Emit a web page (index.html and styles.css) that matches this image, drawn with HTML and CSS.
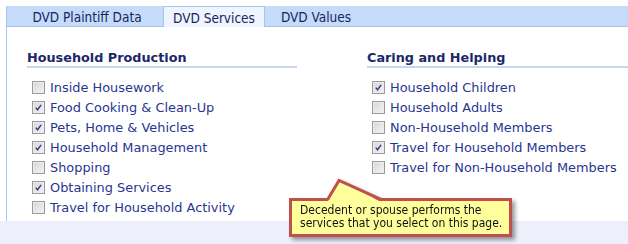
FILE: index.html
```html
<!DOCTYPE html>
<html>
<head>
<meta charset="utf-8">
<link rel="stylesheet" href="styles.css">
</head>
<body>
<div class="page">
  <div class="panel">
    <div class="tabbar">
      <div class="tab tab-plaintiff">DVD Plaintiff Data</div>
      <div class="tab tab-services active">DVD Services</div>
      <div class="tab tab-values">DVD Values</div>
    </div>
    <div class="content">
      <section class="col col-left">
        <h2 class="heading">Household Production</h2>
        <ul class="list">
          <li class="item"><span class="cb"></span>Inside Housework</li>
          <li class="item"><span class="cb checked"><svg viewBox="0 0 13 13"><path d="M3.3 6.6 L5.4 9.2 L9.6 3.4"/></svg></span>Food Cooking &amp; Clean-Up</li>
          <li class="item"><span class="cb checked"><svg viewBox="0 0 13 13"><path d="M3.3 6.6 L5.4 9.2 L9.6 3.4"/></svg></span>Pets, Home &amp; Vehicles</li>
          <li class="item"><span class="cb checked"><svg viewBox="0 0 13 13"><path d="M3.3 6.6 L5.4 9.2 L9.6 3.4"/></svg></span>Household Management</li>
          <li class="item"><span class="cb"></span>Shopping</li>
          <li class="item"><span class="cb checked"><svg viewBox="0 0 13 13"><path d="M3.3 6.6 L5.4 9.2 L9.6 3.4"/></svg></span>Obtaining Services</li>
          <li class="item"><span class="cb"></span>Travel for Household Activity</li>
        </ul>
      </section>
      <section class="col col-right">
        <h2 class="heading">Caring and Helping</h2>
        <ul class="list">
          <li class="item"><span class="cb checked"><svg viewBox="0 0 13 13"><path d="M3.3 6.6 L5.4 9.2 L9.6 3.4"/></svg></span>Household Children</li>
          <li class="item"><span class="cb"></span>Household Adults</li>
          <li class="item"><span class="cb"></span>Non-Household Members</li>
          <li class="item"><span class="cb checked"><svg viewBox="0 0 13 13"><path d="M3.3 6.6 L5.4 9.2 L9.6 3.4"/></svg></span>Travel for Household Members</li>
          <li class="item"><span class="cb"></span>Travel for Non-Household Members</li>
        </ul>
      </section>
    </div>
  </div>
  <div class="footer"></div>
  <div class="tip">
    <svg class="tip-pointer" width="70" height="26" viewBox="0 0 70 26">
      <polygon points="7,24.5 19,2 62,24.5" fill="#ffff9c"/>
      <polyline points="7.5,21.8 19,2.5 62,21.8" fill="none" stroke="#c0504d" stroke-width="3" stroke-linejoin="miter"/>
    </svg>
    <p class="tip-text">Decedent or spouse performs the<br>services that you select on this page.</p>
  </div>
</div>
</body>
</html>
```
FILE: styles.css
```css
html, body {
  margin: 0;
  padding: 0;
  background: #ffffff;
}
.page {
  position: relative;
  width: 628px;
  height: 244px;
  overflow: hidden;
  display: flex;
  flex-direction: column;
}
.panel {
  margin: 6px 0 0 6px;
  height: 215px;
  border-left: 1px solid #a9c6ee;
  display: flex;
  flex-direction: column;
}
.tabbar {
  height: 20px;
  background: #c4dcf9;
  border-bottom: 1px solid #a6c4ec;
  display: flex;
  align-items: stretch;
  padding-left: 15px;
}
.tab {
  display: flex;
  align-items: center;
  justify-content: center;
  font-family: "DejaVu Sans", "Liberation Sans", sans-serif;
  font-stretch: condensed;
  font-size: 13.5px;
  color: #17245f;
  box-sizing: border-box;
  padding-top: 1px;
}
.tab-plaintiff { width: 130px; }
.tab-services { width: 102px; margin-left: 11px; }
.tab-values { width: 92px; margin-left: 5px; }
.tab.active {
  background: #eef5fe;
  border: 1px solid #a6c4ec;
  border-bottom: none;
  margin-bottom: -1px;
}
.content {
  display: flex;
  gap: 70px;
  padding: 23px 0 0 20px;
}
.col-left { width: 270px; }
.col-right { flex: 1; }
.heading {
  margin: 0;
  font-family: "DejaVu Sans", Verdana, sans-serif;
  font-size: 12.8px;
  font-weight: bold;
  color: #1b2868;
  line-height: 16px;
  height: 16px;
  border-bottom: 2px solid #c6d7ef;
}
.list {
  list-style: none;
  margin: 9px 0 0 0;
  padding: 0 0 0 5px;
}
.item {
  height: 20px;
  display: flex;
  align-items: center;
  gap: 5px;
  font-family: "DejaVu Sans", Verdana, sans-serif;
  font-size: 12.9px;
  color: #283591;
  white-space: nowrap;
}
.cb {
  width: 11px;
  height: 11px;
  border: 1px solid #9a9a9a;
  background: linear-gradient(135deg, #d6d6d6 0%, #f3f3f3 100%);
  box-shadow: inset 0 0 0 1px #ededed;
  flex: none;
  display: flex;
}
.cb svg {
  width: 11px;
  height: 11px;
}
.cb svg path {
  fill: none;
  stroke: #2d3f8e;
  stroke-width: 1.7;
}
.footer {
  flex: 1;
  background: #efeffb;
}
.tip {
  position: absolute;
  left: 289px;
  top: 198px;
  width: 217px;
  height: 33px;
  background: #ffff9c;
  border: 3px solid #c0504d;
  filter: drop-shadow(3px 3px 2px rgba(0, 0, 0, 0.4));
}
.tip-pointer {
  position: absolute;
  left: 28px;
  top: -23px;
}
.tip-text {
  margin: 0;
  padding: 3px 0 0 8px;
  font-family: "DejaVu Sans", "Liberation Sans", sans-serif;
  font-stretch: condensed;
  font-size: 12px;
  line-height: 13px;
  color: #111111;
  white-space: nowrap;
}
```
